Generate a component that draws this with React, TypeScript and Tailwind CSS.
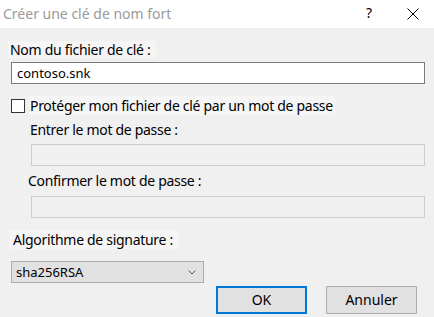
import React from "react";

const font = { fontFamily: '"Noto Sans", "Open Sans", sans-serif' };

export default function App() {
  return (
    <div className="w-[434px] h-[317px] overflow-hidden bg-[#f0f0f0] text-black" style={font}>
      {/* title bar */}
      <div className="h-[28px] bg-white flex items-center relative">
        <span className="pl-[3px] text-[14px] text-[#9a9a9a] leading-none whitespace-nowrap">Créer une clé de nom fort</span>
        <span className="absolute left-[366px] top-[6px] text-[14px] leading-none text-black">?</span>
        <svg className="absolute left-[407px] top-[8px]" width="12" height="12" viewBox="0 0 12 12">
          <path d="M0.5 0.5 L11.5 11.5 M11.5 0.5 L0.5 11.5" stroke="#000" strokeWidth="1" />
        </svg>
      </div>

      {/* body */}
      <div className="pt-[13px] tracking-[-0.3px]">
        <div className="ml-[8px] w-fit h-[17px] bg-[#f5f5f5] flex items-center pl-[2px] pr-[6px] text-[14px] leading-none whitespace-nowrap">
          Nom du fichier de clé :
        </div>
        <div className="mt-[4px] ml-[11px] w-[414px] h-[22px] border border-[#7a7a7a] bg-white flex items-center pl-[5px] text-[13px] leading-none tracking-normal">
          contoso.snk
        </div>

        <div className="mt-[12px] ml-[11px] h-[19px] flex items-center">
          <div className="w-[14px] h-[14px] border border-[#333] bg-white" />
          <div className="ml-[4px] h-[19px] w-fit bg-[#f5f5f5] flex items-center pl-[1px] pr-[2px] text-[14px] leading-none whitespace-nowrap">
            Protéger mon fichier de clé par un mot de passe
          </div>
        </div>

        <div className="mt-[5px] ml-[30px] h-[20px] flex items-center text-[14px] leading-none whitespace-nowrap">
          Entrer le mot de passe :
        </div>
        <div className="mt-[4px] ml-[31px] w-[394px] h-[22px] border border-[#cccccc] bg-[#f0f0f0]" />

        <div className="mt-[5px] ml-[28px] h-[20px] flex items-center text-[14px] leading-none whitespace-nowrap">
          Confirmer le mot de passe :
        </div>
        <div className="mt-[5px] ml-[31px] w-[394px] h-[22px] border border-[#cccccc] bg-[#f0f0f0]" />

        <div className="mt-[12px] ml-[9px] w-fit h-[19px] bg-[#f5f5f5] flex items-center pl-[4px] pr-[6px] text-[14px] leading-none whitespace-nowrap">
          Algorithme de signature :
        </div>

        <div className="mt-[12px] ml-[11px] w-[193px] h-[22px] border border-[#adadad] bg-[#e1e1e1] flex items-center justify-between pl-[4px] pr-[7px] text-[13px] leading-none tracking-normal">
          <span>sha256RSA</span>
          <svg width="8" height="5" viewBox="0 0 8 5">
            <path d="M0.5 0.5 L4 4 L7.5 0.5" stroke="#555" strokeWidth="1" fill="none" />
          </svg>
        </div>

        <div className="mt-[3px] flex justify-end pr-[17px] gap-[19px] tracking-normal">
          <div className="w-[91px] h-[28px] border-2 border-[#0078d7] bg-[#e1e1e1] flex items-center justify-center text-[14px] leading-none">
            OK
          </div>
          <div className="w-[91px] h-[28px] border border-[#adadad] bg-[#e1e1e1] flex items-center justify-center text-[14px] leading-none">
            Annuler
          </div>
        </div>
      </div>
    </div>
  );
}
